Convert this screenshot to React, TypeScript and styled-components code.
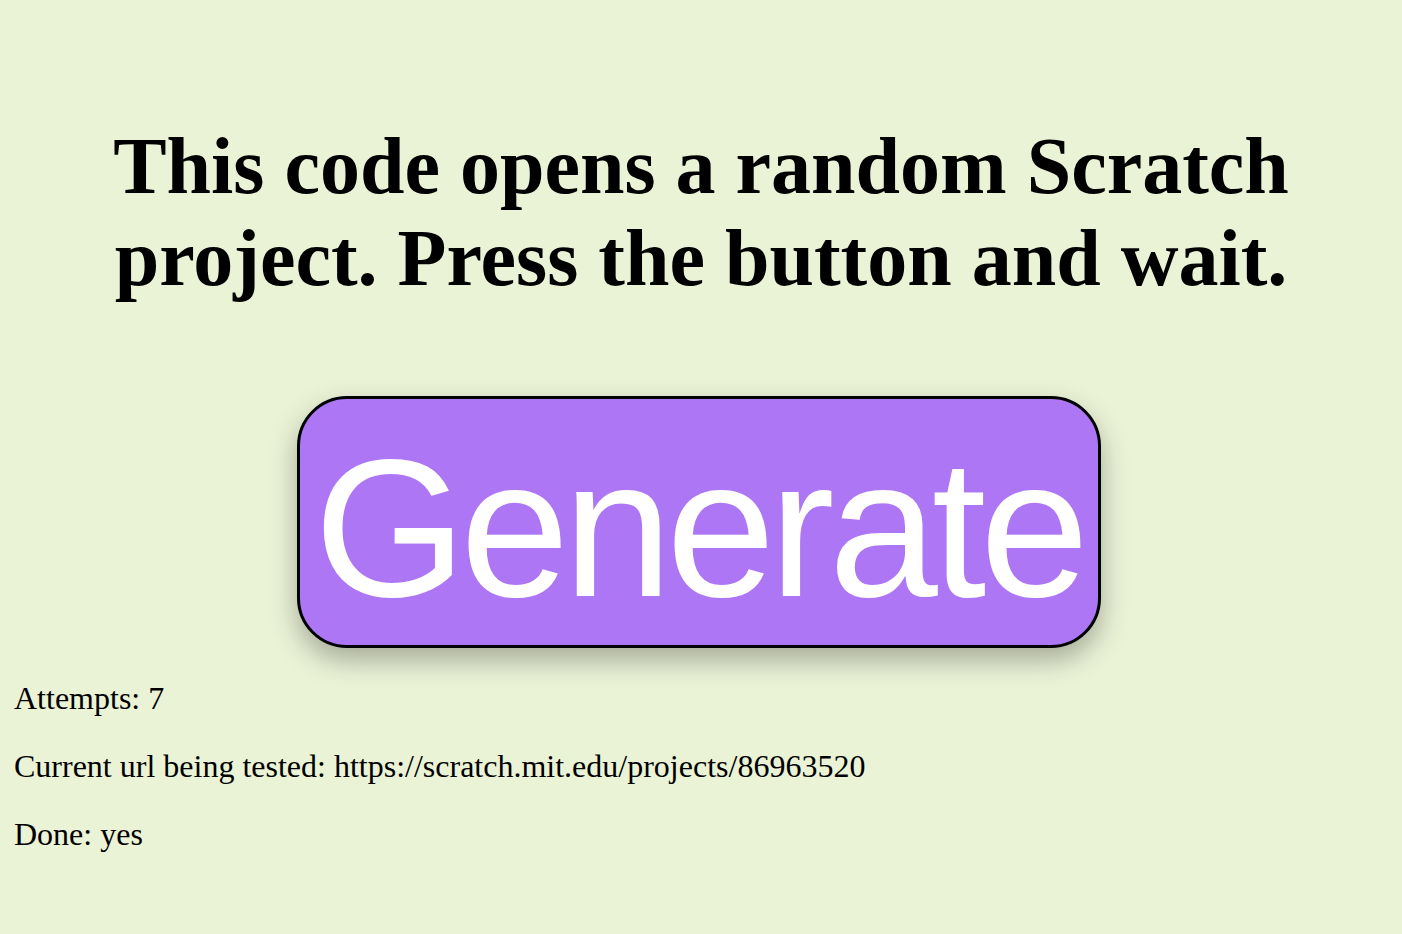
import React from "react";
import styled, { createGlobalStyle } from "styled-components";

const GlobalStyle = createGlobalStyle`
  html, body {
    margin: 0;
    padding: 0;
    background: #ebf3d7;
  }
  body {
    font-family: "Liberation Serif", "Times New Roman", serif;
    color: #000;
  }
`;

const Page = styled.main`
  display: flex;
  flex-direction: column;
  padding: 120px 14px 40px;
  min-height: 934px;
  box-sizing: border-box;
`;

const Title = styled.h1`
  margin: 0;
  font-family: "Liberation Serif", "Times New Roman", serif;
  font-size: 80px;
  font-weight: 700;
  line-height: 92px;
  text-align: center;
`;

const ButtonRow = styled.div`
  display: flex;
  justify-content: center;
  margin-top: 92px;
  margin-right: 5px;
`;

const GenerateButton = styled.button`
  box-sizing: border-box;
  width: 804px;
  height: 252px;
  padding: 14px 0 0;
  border: 3px solid #000;
  border-radius: 50px;
  background: #ad76f4;
  color: #fff;
  font-family: "Liberation Sans", Arial, Helvetica, sans-serif;
  font-size: 196px;
  letter-spacing: -6px;
  line-height: 1;
  box-shadow: 0 12px 28px rgba(0, 0, 0, 0.3);
  cursor: pointer;
  display: flex;
  align-items: center;
  justify-content: center;
`;

const Info = styled.div`
  display: flex;
  flex-direction: column;
  gap: 34px;
  margin-top: 33px;
`;

const Line = styled.p`
  margin: 0;
  font-size: 32px;
  line-height: 34px;
`;

export default function App() {
  return (
    <>
      <GlobalStyle />
      <Page>
        <Title>
          This code opens a random Scratch
          <br />
          project. Press the button and wait.
        </Title>
        <ButtonRow>
          <GenerateButton type="button">Generate</GenerateButton>
        </ButtonRow>
        <Info>
          <Line>Attempts: 7</Line>
          <Line>Current url being tested: https://scratch.mit.edu/projects/86963520</Line>
          <Line>Done: yes</Line>
        </Info>
      </Page>
    </>
  );
}
